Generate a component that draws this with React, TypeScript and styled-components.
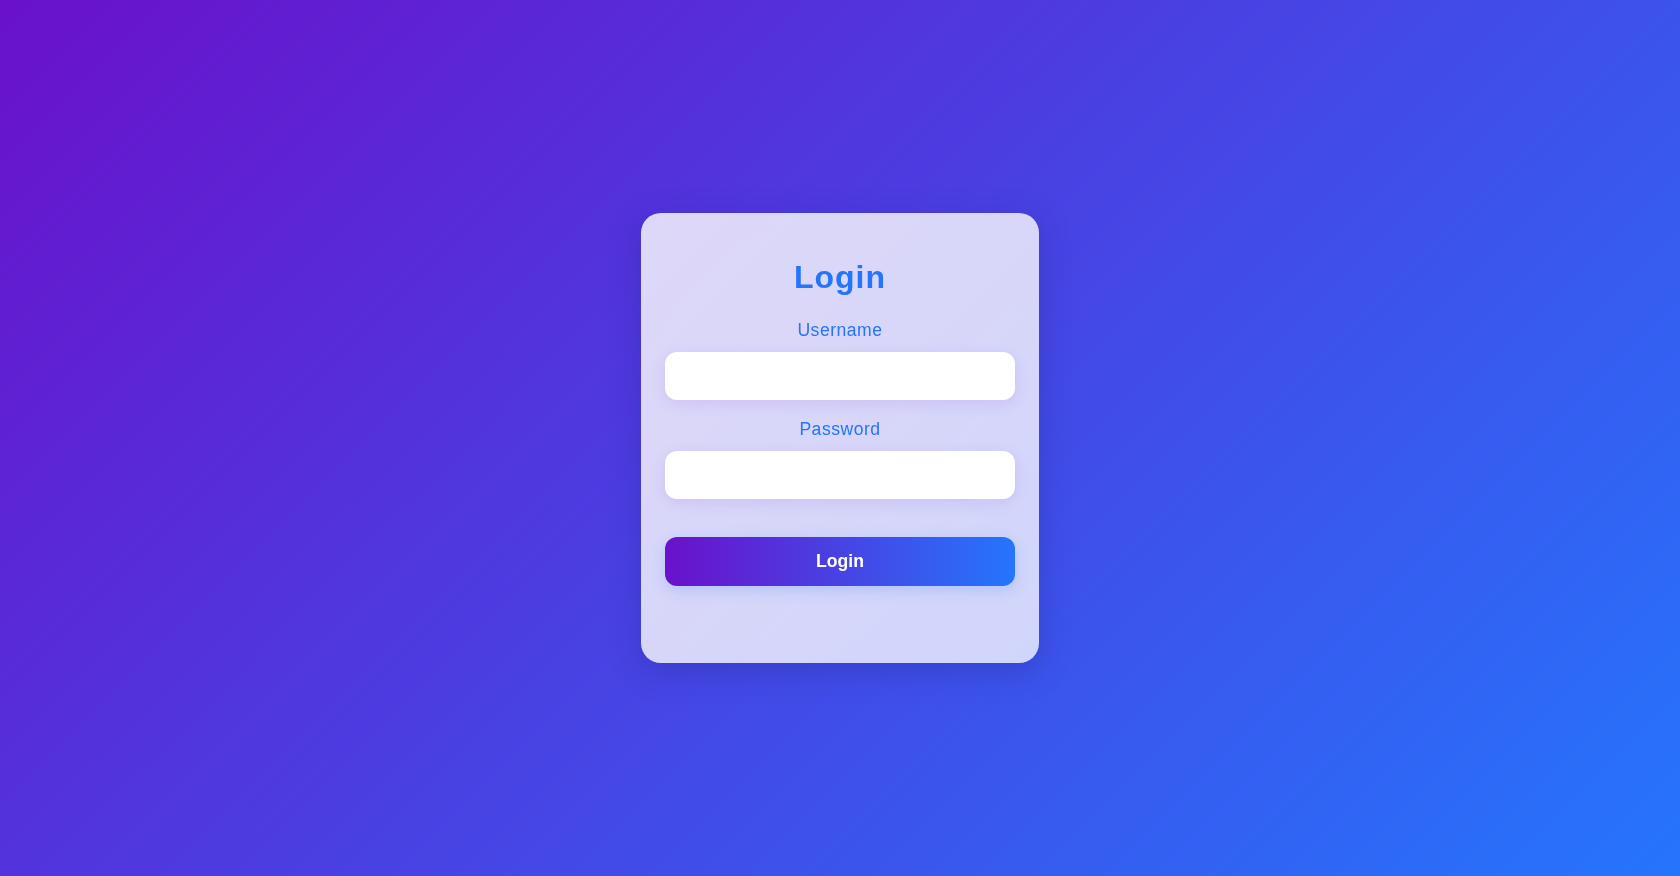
import React, { useState } from "react";
import styled, { createGlobalStyle } from "styled-components";

const GlobalStyle = createGlobalStyle`
    html, body {
        margin: 0;
        padding: 0;
        height: 100%;
    }
    body {
        font-family: "Liberation Sans", Arial, sans-serif;
    }
    #root {
        height: 100%;
    }
`

const Page = styled.div`
    min-height: 100vh;
    display: flex;
    align-items: center;
    justify-content: center;
    background: linear-gradient(135deg, #6a11cb, #2575fc);
`

const Card = styled.form`
    width: 398px;
    box-sizing: border-box;
    padding: 46px 24px 77px;
    border-radius: 20px;
    background: linear-gradient(135deg, rgba(255, 255, 255, 0.81), rgba(255, 255, 255, 0.76));
    backdrop-filter: blur(10px);
    box-shadow: 0 8px 32px rgba(31, 38, 135, 0.3);
    display: flex;
    flex-direction: column;
    text-align: center;
`

const Title = styled.h2`
    margin: 0 0 24px;
    font-size: 32px;
    font-weight: 700;
    letter-spacing: 1px;
    color: #2575fc;
`

const Field = styled.div<{ last?: boolean }>`
    display: flex;
    flex-direction: column;
    margin-bottom: ${props => props.last ? "38px" : "19px"};
`

const Label = styled.label`
    font-size: 17.6px;
    letter-spacing: 0.5px;
    color: #2575fc;
    margin-bottom: 11px;
`

const Input = styled.input`
    height: 48px;
    box-sizing: border-box;
    border: none;
    border-radius: 12px;
    padding: 0 15px;
    font-size: 16px;
    font-family: inherit;
    background: #fff;
    outline: none;
    box-shadow: 0 4px 15px rgba(106, 17, 203, 0.1);
`

const Button = styled.button`
    height: 49px;
    border: none;
    border-radius: 12px;
    background: linear-gradient(90deg, #6a11cb, #2575fc);
    color: #fff;
    font-family: inherit;
    font-size: 17.6px;
    font-weight: 700;
    cursor: pointer;
    box-shadow: 0 4px 15px rgba(37, 117, 252, 0.2);
`

export default function App() {
    const [username, setUsername] = useState("")
    const [password, setPassword] = useState("")

    return (
        <Page>
            <GlobalStyle />
            <Card onSubmit={e => e.preventDefault()}>
                <Title>Login</Title>
                <Field>
                    <Label htmlFor="username">Username</Label>
                    <Input id="username" value={username} onChange={e => setUsername(e.target.value)} />
                </Field>
                <Field last>
                    <Label htmlFor="password">Password</Label>
                    <Input id="password" type="password" value={password} onChange={e => setPassword(e.target.value)} />
                </Field>
                <Button type="submit">Login</Button>
            </Card>
        </Page>
    )
}
